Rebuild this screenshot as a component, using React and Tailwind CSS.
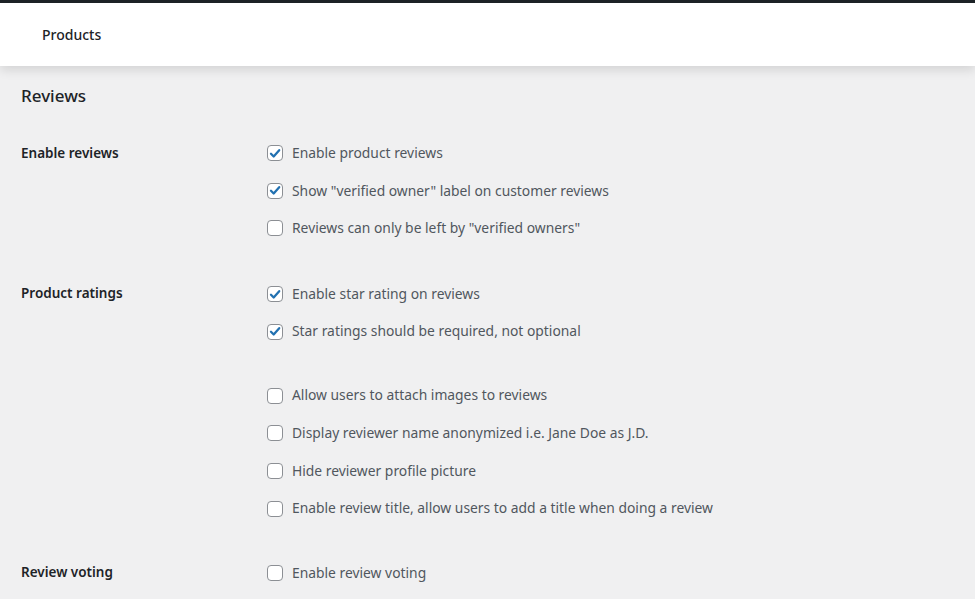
import React from "react";

const Box = ({ checked }) => (
  <span className="flex h-4 w-4 shrink-0 items-center justify-center rounded-[4px] border border-[#8c8f94] bg-white">
    {checked && (
      <svg viewBox="0 0 16 16" className="h-[15px] w-[15px]">
        <path d="M3.4 8.3 L6.5 11.4 L12.8 4.2" fill="none" stroke="#2271b1" strokeWidth="2.6" strokeLinecap="round" strokeLinejoin="round" />
      </svg>
    )}
  </span>
);

const Opt = ({ checked, children }) => (
  <div className="flex h-[37.6px] items-center gap-[9px]">
    <Box checked={checked} />
    <span className="text-[13.85px] text-[#50575e]">{children}</span>
  </div>
);

const Row = ({ label, children, className = "" }) => (
  <div className={"flex " + className}>
    <div className="w-[246px] shrink-0 pt-[10px] text-[13.5px] font-semibold text-[#1d2327]">{label}</div>
    <div className="mt-[2px] flex flex-col">{children}</div>
  </div>
);

export default function App() {
  return (
    <div className="min-h-[599px] bg-[#f0f0f1] font-['Noto_Sans',sans-serif]">
      <div className="h-[3px] bg-[#1d2327]" />
      <div className="relative flex h-[63px] items-center bg-white pl-[42px] shadow-[0_4px_10px_rgba(0,0,0,0.12)]">
        <span className="text-[14px] font-medium text-[#1d2327]">Products</span>
      </div>
      <div className="px-[21px] pt-[17px]">
        <h2 className="text-[17px] font-medium text-[#1d2327]">Reviews</h2>
        <Row label="Enable reviews" className="mt-[24px]">
          <Opt checked>Enable product reviews</Opt>
          <Opt checked>Show "verified owner" label on customer reviews</Opt>
          <Opt>Reviews can only be left by "verified owners"</Opt>
        </Row>
        <Row label="Product ratings" className="mt-[26px]">
          <Opt checked>Enable star rating on reviews</Opt>
          <Opt checked>Star ratings should be required, not optional</Opt>
          <div className="h-[26.5px]" />
          <Opt>Allow users to attach images to reviews</Opt>
          <Opt>Display reviewer name anonymized i.e. Jane Doe as J.D.</Opt>
          <Opt>Hide reviewer profile picture</Opt>
          <Opt>Enable review title, allow users to add a title when doing a review</Opt>
        </Row>
        <Row label="Review voting" className="mt-[25px]">
          <Opt>Enable review voting</Opt>
        </Row>
      </div>
    </div>
  );
}
